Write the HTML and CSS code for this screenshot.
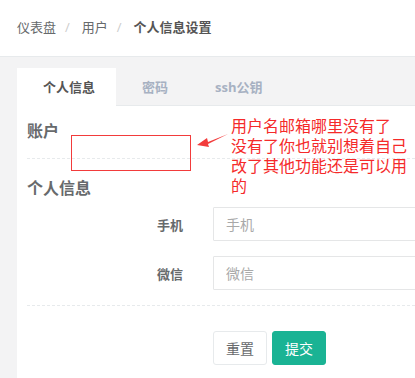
FILE: index.html
```html
<!DOCTYPE html>
<html lang="zh-CN">
<head>
  <meta charset="UTF-8">
  <title>个人信息设置</title>
  <link rel="stylesheet" href="styles.css">
</head>
<body>
  <div class="page-heading">
    <ol class="breadcrumb">
      <li><a href="#">仪表盘</a></li>
      <li class="sep">/</li>
      <li><a href="#">用户</a></li>
      <li class="sep">/</li>
      <li class="active">个人信息设置</li>
    </ol>
  </div>

  <div class="wrapper">
    <div class="tabs-container">
      <ul class="nav-tabs">
        <li class="tab active">个人信息</li>
        <li class="tab">密码</li>
        <li class="tab">ssh公钥</li>
      </ul>

      <div class="tab-content">
        <h3 class="section-title">账户</h3>
        <div class="hr-dashed"></div>

        <h3 class="section-title second">个人信息</h3>
        <form class="form-horizontal">
          <div class="form-group">
            <label class="control-label">手机</label>
            <input class="form-control" type="text" placeholder="手机">
          </div>
          <div class="form-group">
            <label class="control-label">微信</label>
            <input class="form-control" type="text" placeholder="微信">
          </div>
          <div class="hr-dashed"></div>
          <div class="form-actions">
            <button class="btn btn-white" type="reset">重置</button>
            <button class="btn btn-primary" type="submit">提交</button>
          </div>
        </form>
      </div>
    </div>

    <!-- 截图上的批注 -->
    <div class="note-box"></div>
    <svg class="note-arrow" width="40" height="20" viewBox="0 0 40 20">
      <path d="M32 2 L12 10 L11 6 L1 13 L13 15 L12 12 Z" fill="#f23b3b"/>
    </svg>
    <p class="note-text">用户名邮箱哪里没有了<br>没有了你也就别想着自己<br>改了其他功能还是可以用<br>的</p>
  </div>
</body>
</html>
```

FILE: styles.css
```css
* { margin: 0; padding: 0; box-sizing: border-box; }
body {
  background: #f3f3f4;
  font-family: "Open Sans", "Noto Sans CJK SC", sans-serif;
  font-size: 13px; color: #676a6c;
  width: 415px; height: 378px; overflow: hidden;
}
a { color: inherit; text-decoration: none; }

.page-heading { background: #fff; height: 57px; padding: 18px 17px 0; border-bottom: 1px solid #e7eaec; }
.breadcrumb { list-style: none; display: flex; line-height: 18px; }
.breadcrumb .sep { color: #ccc; padding: 0 12px 0 9px; }
.breadcrumb .active { font-weight: bold; color: #555; }

.wrapper { position: relative; width: 100%; height: 321px; overflow: hidden; padding: 11px 0 0 17px; }

.nav-tabs { list-style: none; display: flex; border-bottom: 1px solid #e7eaec; height: 38px; }
.tab {
  padding: 10px 20px 10px 25px; line-height: 17px;
  font-weight: bold; color: #a7b1c2;
  border: 1px solid transparent; border-bottom: 0;
}
.tab.active { background: #fff; color: #555; margin-bottom: -1px; height: 38px; }

.tab-content { background: #fff; padding: 14px 0 0 10px; height: 272px; }
.section-title { font-size: 16px; font-weight: bold; line-height: 22px; color: #676a6c; }
.section-title.second { margin-top: 15px; }
.hr-dashed { border-top: 1px dashed #e7eaec; margin-top: 16px; }
.hr-dashed + .section-title { margin-top: 18px; }

.form-horizontal { margin-top: 8px; }
.form-group { display: grid; grid-template-columns: 156px 1fr; column-gap: 30px; align-items: center; margin-bottom: 15px; }
.control-label { text-align: right; font-weight: bold; color: #676a6c; }
.form-control {
  height: 34px; width: calc(100% + 40px);
  border: 1px solid #e5e6e7; border-radius: 1px;
  padding: 6px 12px; font: inherit; font-size: 14px; color: #676a6c;
}
.form-control::placeholder { color: #a9a9a9; }
.form-horizontal .hr-dashed { margin-top: 5px; }

.form-actions { display: flex; gap: 5px; margin: 25px 0 0 186px; }
.btn {
  height: 34px; padding: 6px 12px; border-radius: 3px;
  font: inherit; font-size: 14px; cursor: pointer;
}
.btn-white { background: #fff; border: 1px solid #e7eaec; color: #676a6c; }
.btn-primary { background: #1ab394; border: 1px solid #1ab394; color: #fff; }

.note-box { position: absolute; left: 71px; top: 78px; width: 120px; height: 36px; border: 1px solid #f23b3b; }
.note-arrow { position: absolute; left: 196px; top: 75px; }
.note-text {
  position: absolute; left: 231px; top: 59px;
  font-size: 16px; line-height: 20px; color: #f52a2a;
}
```
